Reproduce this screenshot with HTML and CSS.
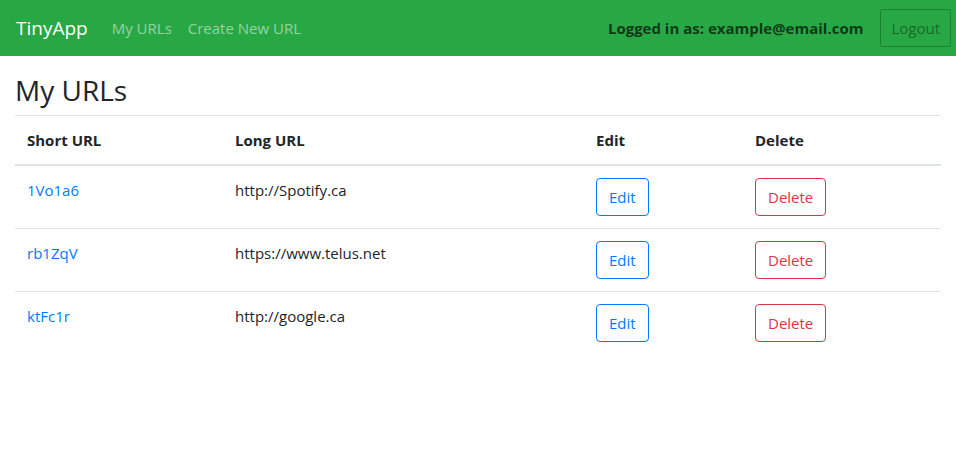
FILE: index.html
```html
<!DOCTYPE html>
<html lang="en">
<head>
<meta charset="utf-8">
<title>TinyApp</title>
<link rel="stylesheet" href="styles.css">
</head>
<body>
<nav class="navbar">
  <a class="brand" href="#">TinyApp</a>
  <div class="nav-links">
    <a class="nav-link" href="#">My URLs</a>
    <a class="nav-link" href="#">Create New URL</a>
  </div>
  <div class="nav-right">
    <span class="login-text">Logged in as: example@email.com</span>
    <button class="btn btn-logout" type="button">Logout</button>
  </div>
</nav>
<main class="container">
  <h3 class="title">My URLs</h3>
  <table class="table">
    <colgroup>
      <col class="c1"><col class="c2"><col class="c3"><col class="c4">
    </colgroup>
    <thead>
      <tr><th>Short URL</th><th>Long URL</th><th>Edit</th><th>Delete</th></tr>
    </thead>
    <tbody>
      <tr>
        <td><a href="#">1Vo1a6</a></td>
        <td>http://Spotify.ca</td>
        <td><button class="btn btn-edit" type="button">Edit</button></td>
        <td><button class="btn btn-delete" type="button">Delete</button></td>
      </tr>
      <tr>
        <td><a href="#">rb1ZqV</a></td>
        <td>https://www.telus.net</td>
        <td><button class="btn btn-edit" type="button">Edit</button></td>
        <td><button class="btn btn-delete" type="button">Delete</button></td>
      </tr>
      <tr>
        <td><a href="#">ktFc1r</a></td>
        <td>http://google.ca</td>
        <td><button class="btn btn-edit" type="button">Edit</button></td>
        <td><button class="btn btn-delete" type="button">Delete</button></td>
      </tr>
    </tbody>
  </table>
</main>
</body>
</html>
```

FILE: styles.css
```css
* { box-sizing: border-box; }

body {
  margin: 0;
  font-family: "Open Sans", "Noto Sans", sans-serif;
  font-size: 15px;
  line-height: 24px;
  color: #212529;
  background: #fff;
}

a { text-decoration: none; }

.navbar {
  display: flex;
  align-items: center;
  height: 56px;
  padding: 0 5px 0 16px;
  background: #28a745;
}

.brand {
  font-size: 19px;
  line-height: 30px;
  color: #fff;
  margin-right: 16px;
}

.nav-links {
  display: flex;
}

.nav-link {
  padding: 8px;
  color: rgba(255, 255, 255, 0.5);
}

.nav-right {
  margin-left: auto;
  display: flex;
  align-items: center;
  gap: 17px;
}

.login-text {
  font-weight: 700;
  color: rgba(0, 0, 0, 0.68);
}

.btn {
  font-family: inherit;
  font-size: 15px;
  line-height: 24px;
  height: 38px;
  padding: 6px 12px;
  background: transparent;
  border: 1px solid;
  border-radius: 4px;
  cursor: pointer;
}

.btn-logout {
  padding: 6px 10px;
  color: rgba(0, 0, 0, 0.4);
  border-color: rgba(0, 0, 0, 0.22);
  border-radius: 2px;
}

.btn-edit {
  color: #007bff;
  border-color: #007bff;
}

.btn-delete {
  color: #dc3545;
  border-color: #dc3545;
}

.container {
  padding: 17px 15px 0;
}

.title {
  margin: 0 0 8px;
  font-size: 28px;
  line-height: 34px;
  font-weight: 500;
  color: #212529;
}

.table {
  width: 100%;
  border-collapse: collapse;
}

.c1 { width: 208px; }
.c2 { width: 361px; }
.c3 { width: 159px; }
.c4 { width: 198px; }

.table th,
.table td {
  padding: 12px;
  text-align: left;
  vertical-align: top;
  border-top: 1px solid #dee2e6;
}

.table th {
  font-weight: 700;
  border-bottom: 2px solid #dee2e6;
}

.table td a { color: #007bff; }
```
